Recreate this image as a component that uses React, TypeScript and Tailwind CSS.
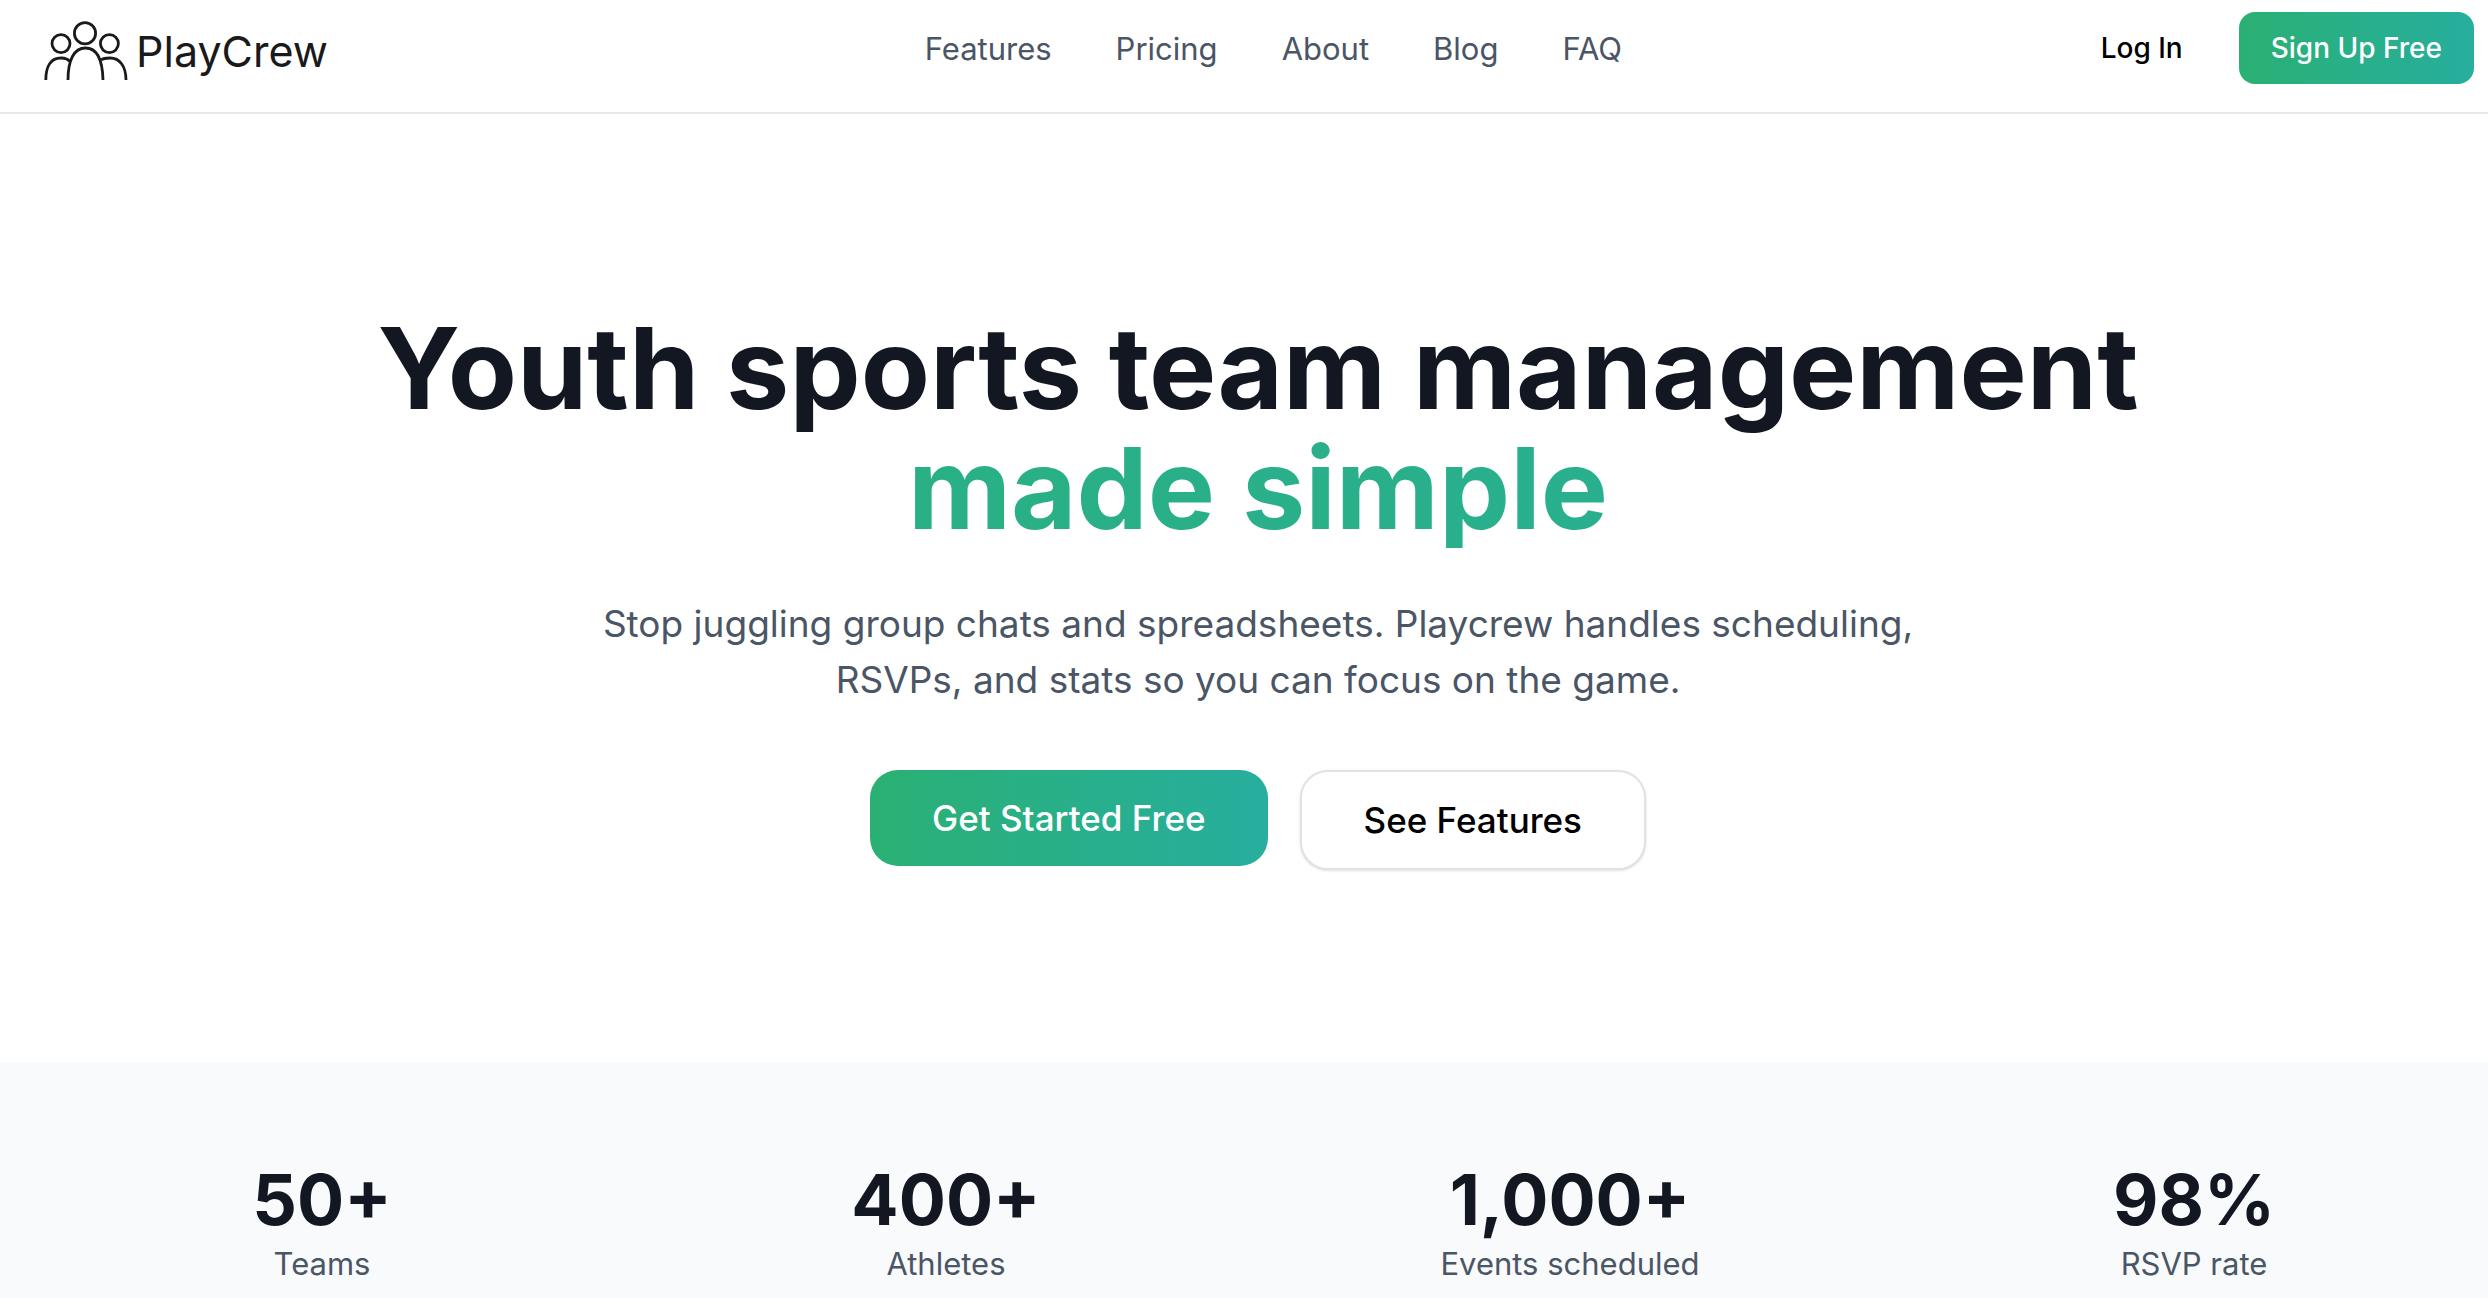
const navLinks = [
  { label: 'Features', href: '#features' },
  { label: 'Pricing', href: '#pricing' },
  { label: 'About', href: '#about' },
  { label: 'Blog', href: '#blog' },
  { label: 'FAQ', href: '#faq' },
];

const stats = [
  { value: '50+', label: 'Teams' },
  { value: '400+', label: 'Athletes' },
  { value: '1,000+', label: 'Events scheduled' },
  { value: '98%', label: 'RSVP rate' },
];

const Logo = () => (
  <a href="#home" className="flex items-center gap-2 text-[#1a1a1a]">
    <svg className="h-[60px] w-[84px]" viewBox="0 0 84 60" fill="none" stroke="currentColor" strokeWidth="2.8" aria-hidden="true">
      {/* heads */}
      <circle cx="41" cy="12.2" r="10.6" />
      <circle cx="17" cy="22.6" r="9" />
      <circle cx="65.400" cy="22.6" r="9" />
      {/* shoulders */}
      <path d="M24 59C24 39 30 27 41.5 27S58.500 39 59 59" />
      <path d="M1.800 59C1.800 45 7 37 17 37C21 37 24.500 38.500 26.500 41" />
      <path d="M57 39C59 37.500 62 37 66 37C75.500 37 82 45 82 59" />
    </svg>
    <span className="text-[43px] leading-none">PlayCrew</span>
  </a>
);

const Header = () => (
  <header className="border-b-2 border-gray-200 pb-4">
    <div className="flex h-24 items-center justify-between pl-[42px] pr-[14px]">
      <div className="w-[436px] pt-1.5 pl-0.5">
        <Logo />
      </div>
      <nav className="flex gap-16 pt-0.5 text-[31px] text-gray-600">
        {navLinks.map((link) => (
          <a key={link.label} href={link.href} className="hover:text-gray-900">
            {link.label}
          </a>
        ))}
      </nav>
      <div className="flex items-center gap-6 text-[28px] font-medium">
        <button type="button" className="h-[72px] rounded-2xl px-8 text-black">
          Log In
        </button>
        <button type="button" className="h-[72px] rounded-2xl bg-linear-to-r from-[#2bb073] to-[#27ae9e] px-8 text-white">
          Sign Up Free
        </button>
      </div>
    </div>
  </header>
);

const Hero = () => (
  <section className="pl-[42px] pr-[14px] pt-[194px] pb-48 text-center">
    <div className="mx-auto max-w-[1792px]">
      <h1 className="text-[113px] leading-[120px] font-bold text-[#131722]">
        Youth sports team management
        <span className="block bg-linear-to-r from-[#2bb07e] to-[#28af94] bg-clip-text text-transparent">made simple</span>
      </h1>
      <p className="mx-auto mt-12 max-w-[1344px] text-[37px] leading-[56px] text-gray-600">
        Stop juggling group chats and spreadsheets. Playcrew handles scheduling, RSVPs, and stats so you can focus on the game.
      </p>
    </div>
    <div className="mt-[62px] flex items-start justify-center gap-8 text-[35px] font-medium">
      <button type="button" className="h-24 rounded-[28px] bg-linear-to-r from-[#2bb073] to-[#27ae9e] px-[62px] text-white">
        Get Started Free
      </button>
      <button type="button" className="h-[100px] rounded-[28px] border-2 border-[#e2e2e2] bg-white px-[62px] text-black shadow-sm">
        See Features
      </button>
    </div>
  </section>
);

const Stats = () => (
  <section className="bg-[#f9fafc] pl-[42px] pr-[14px] pt-[98px] pb-2.5">
    <dl className="grid grid-cols-4 gap-16 text-center">
      {stats.map((stat) => (
        <div key={stat.label} className="flex flex-col-reverse">
          <dt className="text-[31px] leading-[48px] text-gray-600">{stat.label}</dt>
          <dd className="text-[70px] leading-[80px] font-bold text-[#131722]">{stat.value}</dd>
        </div>
      ))}
    </dl>
  </section>
);

const App = () => (
  <div className="min-h-screen bg-white font-['Inter',sans-serif]">
    <Header />
    <main>
      <Hero />
      <Stats />
    </main>
  </div>
);

export default App;
